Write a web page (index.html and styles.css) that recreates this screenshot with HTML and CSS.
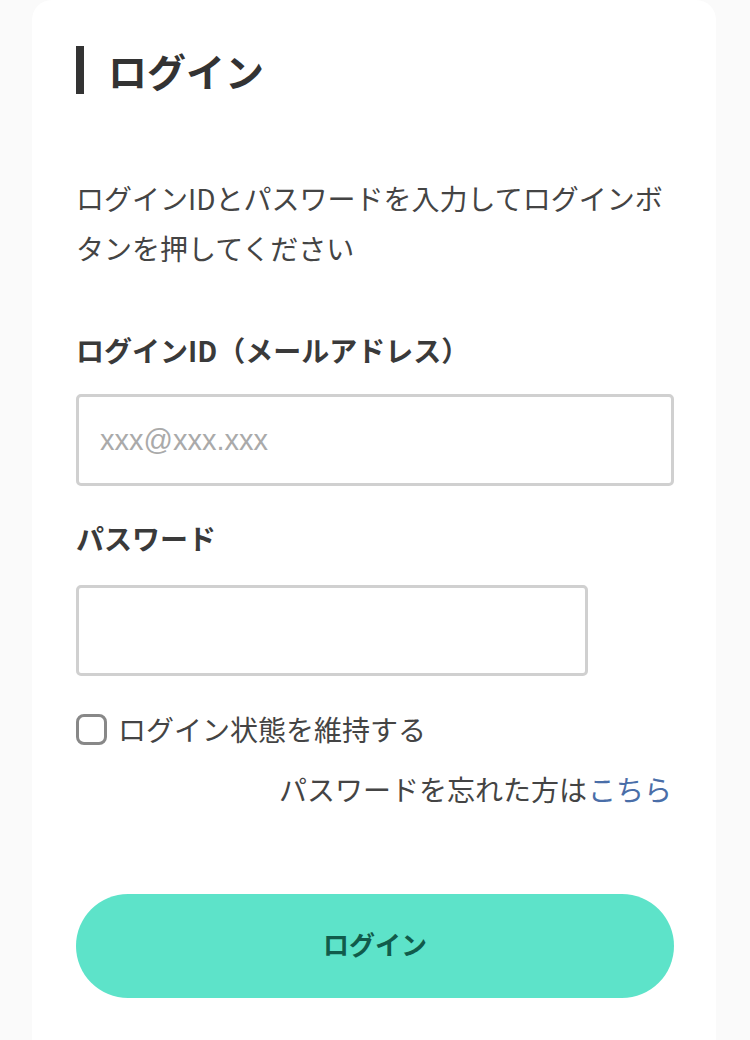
FILE: index.html
```html
<!DOCTYPE html>
<html lang="ja">
<head>
<meta charset="utf-8">
<title>ログイン</title>
<link rel="stylesheet" href="styles.css">
</head>
<body>
<main class="card">
  <h1 class="title">ログイン</h1>
  <p class="lead">ログインIDとパスワードを入力してログインボタンを押してください</p>
  <form class="form">
    <label class="label label-id" for="loginid">ログインID（メールアドレス）</label>
    <input class="field field-wide" id="loginid" type="text" placeholder="xxx@xxx.xxx">
    <label class="label label-pw" for="password">パスワード</label>
    <input class="field field-narrow" id="password" type="password">
    <label class="remember">
      <input class="check" type="checkbox">
      <span>ログイン状態を維持する</span>
    </label>
    <p class="forgot">パスワードを忘れた方は<a class="link" href="#">こちら</a></p>
    <button class="submit" type="button">ログイン</button>
  </form>
</main>
</body>
</html>
```

FILE: styles.css
```css
* {
  box-sizing: border-box;
}

html, body {
  margin: 0;
  padding: 0;
}

body {
  background: #fafafa;
  font-family: "Noto Sans CJK JP", "Noto Sans", sans-serif;
  color: #444;
}

.card {
  margin: 0 34px 0 32px;
  min-height: 1040px;
  background: #fff;
  border-radius: 20px 20px 0 0;
  padding: 46px 42px 0 44px;
}

.title {
  margin: 0;
  height: 48px;
  display: flex;
  align-items: center;
  border-left: 8px solid #333;
  padding-left: 24px;
  font-size: 39px;
  font-weight: 700;
  color: #333;
  line-height: 48px;
}

.lead {
  margin: 79px 0 0;
  font-size: 28px;
  line-height: 50px;
  color: #444;
}

.form {
  display: flex;
  flex-direction: column;
}

.label {
  font-size: 28px;
  font-weight: 700;
  line-height: 40px;
  color: #3a3a3a;
}

.label-id {
  margin-top: 57px;
  margin-bottom: 24px;
}

.label-pw {
  margin-top: 32px;
  margin-bottom: 27px;
}

.field {
  height: 92px;
  border: 3px solid #d0d0d0;
  border-radius: 5px;
  padding: 0 21px;
  font-family: "Liberation Sans", Arial, sans-serif;
  font-size: 29px;
  color: #333;
  background: #fff;
  outline: none;
}

.field::placeholder {
  color: #aaa;
}

.field-wide {
  width: 598px;
}

.field-narrow {
  width: 512px;
  height: 91px;
}

.remember {
  margin-top: 37px;
  display: flex;
  align-items: center;
  gap: 11px;
  font-size: 28px;
  line-height: 32px;
  color: #444;
}

.check {
  appearance: none;
  -webkit-appearance: none;
  margin: 0;
  width: 31px;
  height: 31px;
  border: 3px solid #888;
  border-radius: 8px;
  background: #fff;
}

.forgot {
  margin: 24px 0 0;
  text-align: right;
  font-size: 28px;
  line-height: 40px;
  color: #444;
  padding-right: 2px;
}

.link {
  margin-left: 1px;
  color: #4a6ea8;
  text-decoration: none;
}

.submit {
  margin-top: 85px;
  width: 598px;
  height: 104px;
  border: none;
  border-radius: 52px;
  padding: 0 0 6px;
  background: #5de3c9;
  color: #115b4b;
  font-family: "Noto Sans CJK JP", "Noto Sans", sans-serif;
  font-size: 26px;
  font-weight: 700;
}
```
